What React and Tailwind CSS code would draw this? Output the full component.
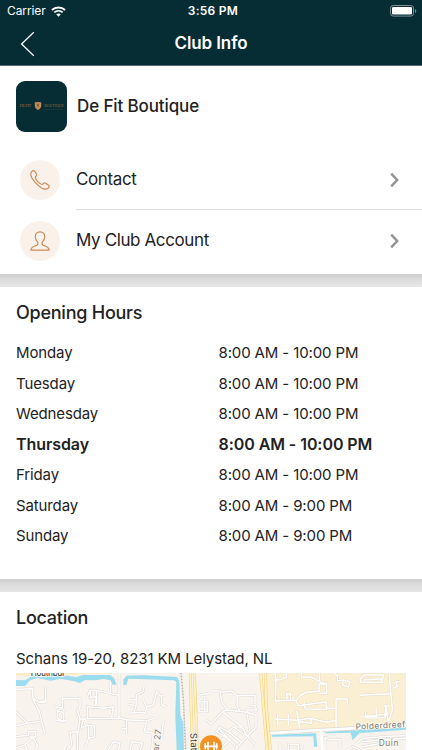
const hours = [
  { day: "Monday", time: "8:00 AM - 10:00 PM" },
  { day: "Tuesday", time: "8:00 AM - 10:00 PM" },
  { day: "Wednesday", time: "8:00 AM - 10:00 PM" },
  { day: "Thursday", time: "8:00 AM - 10:00 PM", today: true },
  { day: "Friday", time: "8:00 AM - 10:00 PM" },
  { day: "Saturday", time: "8:00 AM - 9:00 PM" },
  { day: "Sunday", time: "8:00 AM - 9:00 PM" },
];

const WifiIcon = () => (
  <svg className="w-[15px] h-[11px]" viewBox="0 0 15 11" fill="none" stroke="#fff">
    <path d="M0.9 4C4.6 0.5 10.4 0.5 14.1 4" strokeWidth="2" />
    <path d="M3.3 6.4C5.7 4.3 9.3 4.3 11.7 6.4" strokeWidth="1.8" />
    <path d="M5.2 8.3Q7.5 6.5 9.8 8.3L7.5 10.7Z" fill="#fff" stroke="none" />
  </svg>
);

const BatteryIcon = () => (
  <svg className="w-[27px] h-[12px]" viewBox="0 0 27 12">
    <rect x="0.5" y="0.5" width="23" height="10.6" rx="2.7" fill="none" stroke="#7d8f95" />
    <rect x="2" y="2" width="20" height="7.6" rx="1.3" fill="#fff" />
    <path d="M25 4v4q1.3-.6 1.3-2T25 4Z" fill="#7d8f95" />
  </svg>
);

const PhoneIcon = () => (
  <svg className="w-[20px] h-[20px]" viewBox="0 0 20 20" fill="none" stroke="#cd8c58" strokeWidth="1.2" strokeLinejoin="round">
    <path d="M1.4 2C2.4 .5 3.8 .2 4.7 1.3L6.5 4C7.1 5.2 6.5 6 5.4 6.8C5 8.6 6.3 10.1 8 11.9C9.8 13.7 11.4 14.8 12.6 14.4C13.4 13.1 14.4 12.5 15.6 13.2L18.5 15.2C19.6 16.1 19.2 17.2 18.1 18.2C15.9 20 11.8 18.9 7.1 14.4C2.3 9.7-.4 5.1 1.4 2Z" />
  </svg>
);

const PersonIcon = () => (
  <svg className="w-[20px] h-[20px]" viewBox="0 0 20 20" fill="none" stroke="#cd8c58" strokeWidth="1.2" strokeLinejoin="round">
    <path d="M10 .8C6.9 .8 5.3 2.8 5.3 5.7C5.3 8.2 6.4 9.8 7.6 11.1C8.2 12.2 7.9 13.6 6.8 14.2C4.7 15.2 1.1 15.5 .9 19.2H19.1C18.9 15.5 15.3 15.2 13.2 14.2C12.1 13.6 11.8 12.2 12.4 11.1C13.6 9.8 14.7 8.2 14.7 5.7C14.7 2.8 13.1 .8 10 .8Z" />
  </svg>
);

const Logo = () => (
  <div className="flex w-[51px] h-[51px] items-center justify-center rounded-[9px] bg-[#062c34]">
    <svg className="w-[51px] h-[12px]" viewBox="0 0 51 12">
      <text x="3.4" y="7.4" fontSize="4.6" fill="#94693f" textLength="12" fontFamily="Liberation Serif, serif">DE FIT</text>
      <path d="M18.8 2.2Q22 2.4 22 1.8Q22.2 2.4 25.3 2.2V6Q25 8.8 22 10.2Q19 8.8 18.8 6Z" fill="#c58b55" />
      <path d="M20.8 4.2h2.4M20.9 5.5h2.2M22 4v3.5" stroke="#6e5130" strokeWidth=".7" />
      <text x="28.2" y="7.4" fontSize="4.6" fill="#94693f" textLength="19.6" lengthAdjust="spacingAndGlyphs" fontFamily="Liberation Serif, serif">BOUTIQUE</text>
      <path d="M30 9.3h17" stroke="#3d4a42" strokeWidth=".6" strokeDasharray="1.2 .5" />
    </svg>
  </div>
);

const MenuRow = ({ icon, label }) => (
  <div className="flex h-[61px] items-center pl-5 pr-[23px]">
    <div className="flex w-[40px] h-[40px] items-center justify-center rounded-full bg-[#faf1eb]">
      {icon}
    </div>
    <span className="ml-4 flex-1 pt-px text-[17px] tracking-[-0.38px]">{label}</span>
    <svg className="w-[9px] h-[16px]" viewBox="0 0 9 16" fill="none" stroke="#929292" strokeWidth="2.4">
      <path d="M1.2 1.6L7.2 8L1.2 14.4" />
    </svg>
  </div>
);

const Separator = () => (
  <div className="h-[13px] bg-linear-to-b from-[#cccccc] via-[#dcdcdc] via-45% to-[#e6e6e6]" />
);

// street outlines, used once for the casing and once for the fill
const westStreets =
  "M48 373L98 371L99 400L118 412L137 411V365M118 412L140 407M48 440L82 475L125 469L135 508M125 469L119 443L98 400M48 482L80 475M48 515L86 510V500H107V516H86M48 548L75 540L98 516L112 540L107 555M75 540L82 555M187 397V430L172 437V460L191 470V442L170 439M187 402L240 400V428L232 437L240 462M162 424L187 430M165 465L191 470L200 465M262 396L270 376L305 379L331 386V350M270 376L272 398L290 394V420M290 380L286 420M331 386L355 390M357 324V459L262 461L240 462L236 490L232 505V555M250 463L262 461V425L312 430L340 425L335 458M250 463L243 490L262 480L284 484V515L266 520V480M232 500L210 502L215 540L200 555M266 520L255 548M357 459L380 464L379 508M380 464L440 467M385 418L408 422L403 443L385 445M408 422L409 390L430 380L432 363M409 404H390M430 405L440 426L436 445L418 442L403 443M440 426L460 420L470 380L484 395L490 390M485 395V420L500 425M465 460L440 467L433 500M380 490L365 492M433 500L460 505L455 555M490 470L485 515M390 555L396 530L428 535L420 555M325 555L340 530L360 535L355 555";
const middleStreets =
  "M633 378L660 378L665 410L682 435L668 440L633 478M592 400L600 390L633 384M664 382L695 378L710 392L765 391V423L770 435H740V442L682 435M712 392L711 420L720 440M740 442L768 450V487L742 514L726 485L685 455L668 440M726 485L700 486L685 500L725 532L742 514M685 500L660 487L650 500L690 525L668 545M655 490L680 515M700 486L742 514M725 532L705 555M742 514L768 540M600 410H622V440H597V415M620 465L633 478M614 400V440M742 450L750 500M690 525L710 545M752 420L768 424";
const southStreets =
  "M975 555V517L988 524H1020V548M905 555L907 540M1040 555L1060 545L1080 555M1068 535L1090 520L1170 514L1218 512M1085 530L1150 525L1218 520M1088 545L1145 535M840 536V555H865V538H895V555";
const eastStreets =
  "M825 324L828 350L826 408L888 405L903 390L919 382L957 379V357H980V385H957M824 345L842 344L860 336L858 324M861 403L860 386H872V405M903 335L935 337L958 350V324M904 324V337M888 405L895 422L978 411L979 433L915 432L912 412M958 350L980 358M1008 487V402H1042V420M1008 430H980V422M833 445V482M826 463L894 466L930 460L935 475L898 470M865 448V480M890 436L900 495M930 460L980 472L1008 466M1003 324L1012 334V348L1029 345L1050 350L1045 366L1028 360L1029 345M1080 342L1092 330H1150L1146 352H1082L1080 342M1092 345L1146 341M1168 324L1170 355L1177 435L1165 470M1078 391L1170 386M1177 370L1192 365L1187 350H1202M1096 440L1098 459L1155 458L1157 424L1165 470M1088 455L1160 448M1128 430L1130 458M1150 423H1170";
const greyStreets = westStreets + middleStreets + southStreets;

// drawn at three units per pixel
const LocationMap = () => (
  <svg className="block w-[390px] h-[77px]" viewBox="48 324 1170 231" fontFamily="Inter, sans-serif">
    <rect x="48" y="324" width="1170" height="231" fill="#f8f3ec" />
    <path d="M790 324H1218V487L1040 497L802 502Z" fill="#faefd2" />
    <path d="M48 324H345L200 330L48 333Z" fill="#faedc8" />

    {/* Water */}
    <g fill="#9bdcee">
      <path d="M48 345L76 346L95 333L125 337L150 331L205 332L228 337L250 330L330 330L342 339L350 359H338L331 346L310 342L285 346L255 345L240 354L222 349L205 345L180 342L152 347L112 339L90 346L75 363H48Z" />
      <path d="M370 360V344L380 332L430 331L530 336L538 347L541 450L550 475L552 555H530L526 450L529 350L521 346L440 343L385 341L379 360Z" />
      <path d="M815 509L948 505L952 545H942L940 514L816 515Z" />
      <path d="M976 500L1218 487V494L1078 505L1058 526L1052 503L976 505Z" />
    </g>

    {/* Streets */}
    <g fill="none" strokeLinejoin="round">
      <path d={greyStreets} stroke="#dcd7d2" strokeWidth="7.5" />
      <path d={greyStreets} stroke="#fff" strokeWidth="4.5" />
      <path d={eastStreets} stroke="#e6dcc5" strokeWidth="7.5" />
      <path d={eastStreets} stroke="#fff" strokeWidth="4.5" />
      <path d="M803 505L960 495L1218 482" stroke="#ded9cf" strokeWidth="12" />
      <path d="M803 505L960 495L1218 482M963 495L968 555" stroke="#fff" strokeWidth="8" />
    </g>

    {/* Railway and main roads */}
    <g fill="none">
      <path d="M543 324L550 400L557 555" stroke="#d6d4d0" strokeWidth="3" />
      <path d="M543 324L550 400L557 555" stroke="#bdbbb8" strokeWidth="5" strokeDasharray="3 6" />
      <path d="M571 324L573 420L578 555M583 324L587 430L592 555" stroke="#efd084" strokeWidth="9" />
      <path d="M571 324L573 420L578 555M583 324L587 430L592 555" stroke="#fff1bd" strokeWidth="6" />
      <path d="M782 324L791 430L801 555M796 324L799 430L811 555" stroke="#efd084" strokeWidth="9" />
      <path d="M782 324L791 430L801 555M796 324L799 430L811 555" stroke="#fff1bd" strokeWidth="6" />
    </g>

    {/* Labels */}
    <g fill="#777b80" stroke="#fffaf2" strokeWidth="4" paintOrder="stroke" fontSize="25">
      <text x="92" y="332" fill="#444" fontWeight="500" textLength="104">Houtribdr</text>
      <text transform="translate(476 560) rotate(-83)" fontSize="26" textLength="66">ar 27</text>
      <text transform="translate(571 504) rotate(88)" fill="#444" fontSize="28" textLength="134">Stationsw</text>
      <text transform="translate(1067 494) rotate(-3)" textLength="149">Polderdreef</text>
      <text x="1136" y="543" textLength="59">Duin</text>
    </g>

    {/* Pin */}
    <circle cx="633" cy="544" r="33" fill="#f29222" />
    <path d="M624 530V558M642 530V558M616 535V553M650 535V553M612 544H654" fill="none" stroke="#fff" strokeWidth="5" />
  </svg>
);

export default function App() {
  return (
    <div className="w-[422px] h-[750px] overflow-hidden bg-white font-['Inter',sans-serif] text-[#222222]">
      {/* Status bar */}
      <header className="h-[66px] border-b border-[#526b71] bg-[#062c34] text-white">
        <div className="grid h-[22px] grid-cols-3 items-center pl-[7px] pr-[5px] text-[12px]">
          <div className="flex items-center gap-[5px]">
            <span className="tracking-[-0.1px]">Carrier</span>
            <WifiIcon />
          </div>
          <span className="pl-[2px] text-center font-semibold tracking-[0.25px]">3:56 PM</span>
          <div className="flex justify-end">
            <BatteryIcon />
          </div>
        </div>
        <div className="grid h-[43px] grid-cols-[60px_1fr_60px] items-center">
          <svg className="ml-5 w-[15px] h-[26px]" viewBox="0 0 15 26" fill="none" stroke="#fff" strokeWidth="1.3">
            <path d="M13.8 1.2L1.6 13L13.8 24.8" />
          </svg>
          <h1 className="text-center text-[17px] font-semibold tracking-[-0.1px]">Club Info</h1>
        </div>
      </header>

      {/* Club */}
      <section className="h-[208px] pt-[14.5px]">
        <div className="flex items-center gap-[10.5px] pl-[15.5px]">
          <Logo />
          <h2 className="pt-[2px] text-[17px] font-medium tracking-[-0.12px]">De Fit Boutique</h2>
        </div>
        <div className="mt-[17.5px]">
          <MenuRow icon={<PhoneIcon />} label="Contact" />
          <div className="-mt-px ml-[76px] h-px bg-[#dedede]" />
          <MenuRow icon={<PersonIcon />} label="My Club Account" />
        </div>
      </section>
      <Separator />

      {/* Opening hours */}
      <section className="h-[292px] px-4 pt-[12.5px]">
        <h2 className="h-[26px] text-[18px] leading-[26px] font-medium tracking-[-0.24px]">Opening Hours</h2>
        <div className="mt-[12.5px] text-[15px]">
          {hours.map((row) => (
            <div
              key={row.day}
              className={
                row.today
                  ? "grid h-[30.5px] grid-cols-[202.5px_1fr] items-center pb-px text-[16px] font-semibold tracking-[-0.07px]"
                  : "grid h-[30.5px] grid-cols-[202.5px_1fr] items-center tracking-[-0.13px]"
              }
            >
              <span>{row.day}</span>
              <span>{row.time}</span>
            </div>
          ))}
        </div>
      </section>
      <Separator />

      {/* Location */}
      <section className="px-4 pt-[13px]">
        <h2 className="h-[26px] text-[18px] leading-[26px] font-medium tracking-[-0.26px]">Location</h2>
        <p className="mt-[16.5px] mb-[3.5px] h-[22px] text-[15px] leading-[22px] tracking-[-0.08px]">Schans 19-20, 8231 KM Lelystad, NL</p>
        <LocationMap />
      </section>
    </div>
  );
}
